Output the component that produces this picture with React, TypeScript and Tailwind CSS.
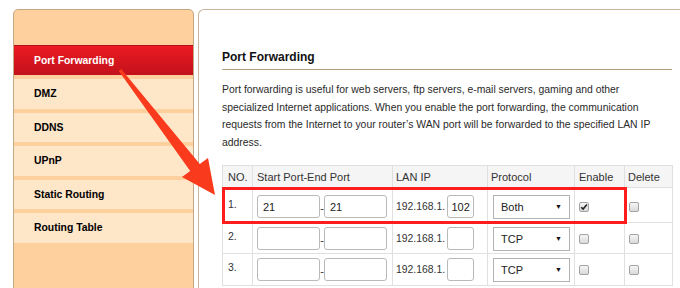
import React from 'react';

const menu = ['DMZ', 'DDNS', 'UPnP', 'Static Routing', 'Routing Table'];

const rows = [
  { no: '1.', start: '21', end: '21', ip: '102', proto: 'Both', enabled: true, h: 'h-[35px]', pt: 'pt-[7px]' },
  { no: '2.', start: '', end: '', ip: '', proto: 'TCP', enabled: false, h: 'h-[31px]', pt: 'pt-[4px]' },
  { no: '3.', start: '', end: '', ip: '', proto: 'TCP', enabled: false, h: 'h-[32px]', pt: 'pt-[4px]' },
];

function Box({ value, w }: { value: string; w: string }) {
  return (
    <div className={`${w} h-[23px] shrink-0 border border-[#b9b9b9] rounded-[3px] bg-white flex items-center px-[5px] text-[11px] text-[#222]`}>
      {value}
    </div>
  );
}

function Check({ checked }: { checked?: boolean }) {
  return (
    <span className="w-[10px] h-[10px] rounded-[2px] border border-[#a3a3a3] bg-gradient-to-b from-[#f6f6f6] to-[#d9d9d9] flex items-center justify-center">
      {checked && (
        <svg width="8" height="8" viewBox="0 0 8 8">
          <path d="M1.2 4.2 L3.1 6.1 L6.9 1.6" fill="none" stroke="#222" strokeWidth="1.6" />
        </svg>
      )}
    </span>
  );
}

export default function App() {
  return (
    <div className="relative w-[680px] h-[288px] overflow-hidden bg-white flex items-start pt-[9px] pl-[13px] gap-[4px] font-['Liberation_Sans',Arial,sans-serif]">
      {/* Sidebar */}
      <div className="w-[181px] h-[300px] shrink-0 rounded-t-[5px] border border-[#c4a784] bg-[#fdd09e] flex flex-col overflow-hidden">
        <div className="h-[35px]" />
        <div className="h-[30px] bg-gradient-to-b from-[#ec1a23] to-[#c2111b] border-t border-[#b30e17] flex items-center pl-[20px] text-[10.4px] font-bold text-white">
          Port Forwarding
        </div>
        {menu.map((m) => (
          <div key={m} className="h-[29.6px] mt-[4px] bg-[#fee6c9] flex items-center pl-[20px] text-[10.4px] font-bold text-black">
            {m}
          </div>
        ))}
      </div>

      {/* Main panel */}
      <div className="w-[520px] h-[300px] shrink-0 rounded-tl-[6px] border-l border-t border-[#c8b59b] pl-[23px] pt-[39px]">
        <div className="w-[450px]">
          <h2 className="text-[12px] font-bold leading-[16px] text-[#111] pb-[4px] border-b-[1.5px] border-[#b49e80]">
            Port Forwarding
          </h2>
          <p className="mt-[11px] text-[10.4px] leading-[17.6px] text-[#2a2a2a]">
            Port forwarding is useful for web servers, ftp servers, e-mail servers, gaming and other
            specialized Internet applications. When you enable the port forwarding, the communication
            requests from the Internet to your router’s WAN port will be forwarded to the specified LAN IP
            address.
          </p>

          <table className="mt-[14px] w-[450px] table-fixed border-collapse text-[11px] text-[#333]">
            <colgroup>
              <col className="w-[30px]" />
              <col className="w-[140px]" />
              <col className="w-[95px]" />
              <col className="w-[87px]" />
              <col className="w-[50px]" />
              <col className="w-[48px]" />
            </colgroup>
            <thead>
              <tr className="h-[22px] bg-[#f5f5f5]">
                <th className="border border-[#e0e0e0] pl-[5px] text-left font-normal">NO.</th>
                <th className="border border-[#e0e0e0] pl-[4px] text-left font-normal">Start Port-End Port</th>
                <th className="border border-[#e0e0e0] pl-[3px] text-left font-normal">LAN IP</th>
                <th className="border border-[#e0e0e0] pl-[3px] text-left font-normal">Protocol</th>
                <th className="border border-[#e0e0e0] pl-[4px] text-left font-normal">Enable</th>
                <th className="border border-[#e0e0e0] pl-[3px] text-left font-normal">Delete</th>
              </tr>
            </thead>
            <tbody>
              {rows.map((r) => (
                <tr key={r.no} className={r.h}>
                  <td className={`border border-[#e0e0e0] align-top pl-[5px] ${r.pt}`}>
                    <div className="h-[19px] flex items-center text-[10.5px]">{r.no}</div>
                  </td>
                  <td className={`border border-[#e0e0e0] align-top pl-[4px] ${r.pt}`}>
                    <div className="flex items-center">
                      <Box value={r.start} w="w-[63px]" />
                      <span className="w-[4px] text-center mt-[3px] leading-[10px]">-</span>
                      <Box value={r.end} w="w-[63px]" />
                    </div>
                  </td>
                  <td className={`border border-[#e0e0e0] align-top pl-[3px] ${r.pt}`}>
                    <div className="flex items-center">
                      <span className="text-[10.4px] mr-[2px]">192.168.1.</span>
                      <div className="w-[27px] h-[23px] shrink-0 border border-[#b9b9b9] rounded-[3px] bg-white flex items-center justify-center text-[11px] text-[#222]">
                        {r.ip}
                      </div>
                    </div>
                  </td>
                  <td className={`border border-[#e0e0e0] align-top pl-[5px] ${r.pt}`}>
                    <div className="w-[77px] h-[24px] border border-[#b3b3b3] bg-white flex items-center justify-between pl-[7px] pr-[7px] text-[11px] text-[#222]">
                      <span>{r.proto}</span>
                      <span className="text-[7px] text-[#111]">▼</span>
                    </div>
                  </td>
                  <td className={`border border-[#e0e0e0] align-top pl-[4px] ${r.pt}`}>
                    <div className="h-[23px] flex items-center">
                      <Check checked={r.enabled} />
                    </div>
                  </td>
                  <td className={`border border-[#e0e0e0] align-top pl-[4px] ${r.pt}`}>
                    <div className="h-[23px] flex items-center">
                      <Check />
                    </div>
                  </td>
                </tr>
              ))}
            </tbody>
          </table>
        </div>
      </div>

      {/* Highlight box */}
      <div className="absolute left-[222px] top-[187px] w-[405px] h-[37px] border-[3px] border-[#fe1d1d] pointer-events-none" />

      {/* Arrow */}
      <svg className="absolute left-0 top-0 pointer-events-none" width="680" height="288" viewBox="0 0 680 288">
        <polygon
          points="118.8,70.9 121.2,69.1 199.8,163.9 208,158 215,195 182,177 190.2,171.1"
          fill="#fa3a1c"
        />
      </svg>
    </div>
  );
}
